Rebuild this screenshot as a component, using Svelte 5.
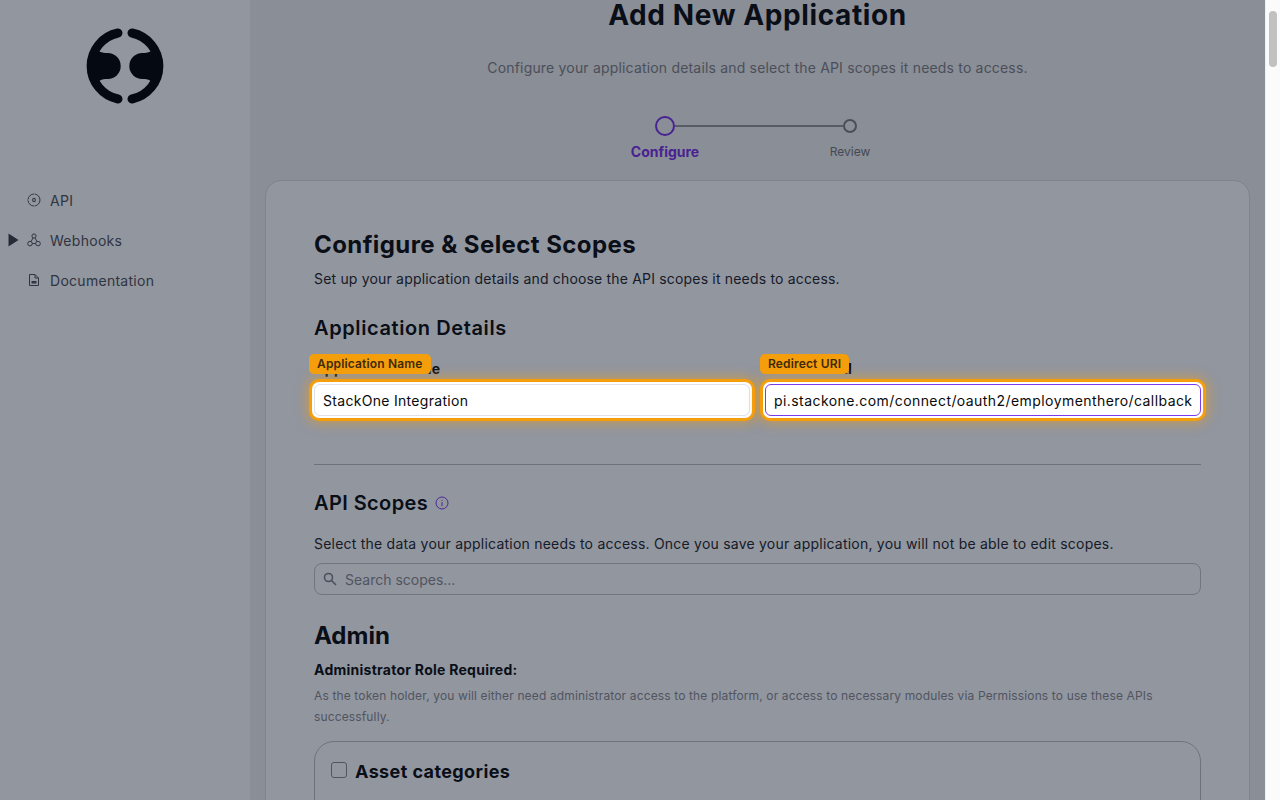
<script>
  const nav = [
    { label: 'API', icon: 'api' },
    { label: 'Webhooks', icon: 'hook', caret: true },
    { label: 'Documentation', icon: 'doc' }
  ];
</script>

<div class="shell">
  <div class="viewport">
    <aside class="sidebar">
      <div class="logo">
        <svg width="78" height="78" viewBox="86 27.5 78 78" aria-label="logo">
          <path class="arc" d="M118 33.5 A33.7 33.7 0 0 0 118 99.5" />
          <path class="arc" d="M132 33.5 A33.7 33.7 0 0 1 132 99.5" />
          <circle cx="107.7" cy="66.5" r="13" fill="#000" />
          <circle cx="142.3" cy="66.5" r="13" fill="#000" />
          <path d="M108 53.5 C101 53.5 98 52 95 47 L92 66.5 L95 86 C98 81 101 79.5 108 79.5 Z" fill="#000" />
          <path d="M142 53.5 C149 53.5 152 52 155 47 L158 66.5 L155 86 C152 81 149 79.5 142 79.5 Z" fill="#000" />
        </svg>
      </div>
      <nav class="nav">
        {#each nav as item}
          <div class="nav-item">
            <span class="caret-slot">
              {#if item.caret}<svg width="11" height="14" viewBox="0 0 11 14"><path d="M0.5 0.5 L10.5 7 L0.5 13.5 Z" fill="#3a3c44" /></svg>{/if}
            </span>
            <span class="nav-icon">
              {#if item.icon === 'api'}
                <svg width="14" height="14" viewBox="0 0 14 14" fill="none" stroke="#4e5057" stroke-width="1">
                  <circle cx="7" cy="7" r="6" stroke-dasharray="8.6 0.8" />
                  <ellipse cx="7" cy="7" rx="1.3" ry="1.8" stroke-width="1.1" />
                </svg>
              {:else if item.icon === 'hook'}
                <svg width="14" height="14" viewBox="0 0 14 14" fill="none" stroke="#4e5057" stroke-width="1">
                  <circle cx="7" cy="3" r="2.1" />
                  <circle cx="3" cy="10.6" r="2.3" />
                  <circle cx="11" cy="10.6" r="2.3" />
                  <path d="M6 5 L4 8.6 M8 5 L10 8.6 M5.3 10.6 H8.7" />
                </svg>
              {:else}
                <svg width="14" height="14" viewBox="0 0 14 14" fill="none" stroke="#4e5057" stroke-width="1">
                  <path d="M2.5 1.5 H8 L11.5 5 V12.5 H2.5 Z M8 1.5 V5 H11.5" />
                  <path d="M4.5 8 H9.5 V10.5 H4.5 Z" fill="#4e5057" stroke="none" />
                </svg>
              {/if}
            </span>
            <span>{item.label}</span>
          </div>
        {/each}
      </nav>
    </aside>

    <main class="main">
      <header class="head">
        <h1>Add New Application</h1>
        <p>Configure your application details and select the API scopes it needs to access.</p>
      </header>

      <div class="stepper">
        <div class="step active">
          <span class="dot big"></span>
          <span class="step-label">Configure</span>
        </div>
        <div class="line"></div>
        <div class="step">
          <span class="dot"></span>
          <span class="step-label">Review</span>
        </div>
      </div>

      <section class="card">
        <h2>Configure &amp; Select Scopes</h2>
        <p class="sub">Set up your application details and choose the API scopes it needs to access.</p>
        <h3>Application Details</h3>
        <div class="fields">
          <div class="field">
            <span class="field-label">Application Name</span>
            <div class="spot">
              <span class="tag">Application Name</span>
              <div class="input">StackOne Integration</div>
            </div>
          </div>
          <div class="field">
            <span class="field-label">Redirect URI</span>
            <div class="spot">
              <span class="tag">Redirect URI</span>
              <div class="input focus">pi.stackone.com/connect/oauth2/employmenthero/callback</div>
            </div>
          </div>
        </div>
        <hr />
        <div class="scopes-title">
          <h3>API Scopes</h3>
          <svg width="14" height="14" viewBox="0 0 14 14" fill="none" stroke="#7c3aed" stroke-width="1">
            <circle cx="7" cy="7" r="6" />
            <path d="M7 6 V10.2 M7 3.8 V4.8" />
          </svg>
        </div>
        <p class="scopes-sub">Select the data your application needs to access. Once you save your application, you will not be able to edit scopes.</p>
        <div class="search">
          <svg width="16" height="16" viewBox="0 0 16 16" fill="none" stroke="#7f7f82" stroke-width="1.6">
            <circle cx="6.5" cy="6.5" r="4" />
            <path d="M9.5 9.5 L14 14" />
          </svg>
          <span>Search scopes...</span>
        </div>
        <h2 class="admin">Admin</h2>
        <p class="role">Administrator Role Required:</p>
        <p class="note">As the token holder, you will either need administrator access to the platform, or access to necessary modules via Permissions to use these APIs successfully.</p>
        <div class="scope-card">
          <span class="check"></span>
          <span class="scope-name">Asset categories</span>
        </div>
      </section>
    </main>
    <div class="overlay"></div>
  </div>
  <div class="scrollbar"><div class="thumb"></div></div>
</div>

<style>
  :global(body) {
    margin: 0;
    overflow: hidden;
    font-family: Inter, "Noto Sans", sans-serif;
    color: #0a0a0a;
  }
  .shell {
    display: flex;
    width: 1280px;
    height: 800px;
    overflow: hidden;
  }
  .viewport {
    position: relative;
    flex: 0 0 1265px;
    display: flex;
    height: 800px;
    overflow: hidden;
    background: #f0f0ef;
  }
  .overlay {
    position: absolute;
    inset: 0;
    background: rgba(11, 20, 40, 0.447);
    z-index: 1;
    pointer-events: none;
  }
  .scrollbar {
    flex: 0 0 15px;
    background: #fbfbfb;
    border-left: 1px solid #f0f0f0;
    box-sizing: border-box;
    padding: 11px 3px 0 3px;
  }
  .thumb {
    height: 56px;
    border-radius: 5px;
    background: #c1c1c1;
  }
  .sidebar {
    flex: 0 0 250px;
    background: #fff;
    box-sizing: border-box;
  }
  .logo {
    display: flex;
    justify-content: center;
    padding-top: 27px;
    height: 150px;
    box-sizing: border-box;
  }
  .arc {
    fill: none;
    stroke: #000;
    stroke-width: 9;
    stroke-linecap: round;
  }
  .nav {
    padding-top: 38px;
    display: flex;
    flex-direction: column;
    gap: 16px;
  }
  .nav-item {
    display: flex;
    align-items: center;
    height: 24px;
    font-size: 14px;
    letter-spacing: 0.28px;
    color: #4e5057;
  }
  .caret-slot {
    width: 27px;
    padding-left: 8px;
    box-sizing: border-box;
    display: flex;
    align-items: center;
  }
  .nav-icon {
    width: 23px;
    display: flex;
    align-items: center;
  }
  .main {
    flex: 1;
    min-width: 0;
    padding: 0 15px;
    box-sizing: border-box;
  }
  .head {
    text-align: center;
  }
  h1 {
    margin: 0;
    font-size: 28px;
    font-weight: 700;
    line-height: 30px;
    letter-spacing: 0.6px;
  }
  .head p {
    margin: 27px 0 0;
    font-size: 14px;
    line-height: 21px;
    letter-spacing: 0.18px;
    color: #7f7f82;
  }
  .stepper {
    display: flex;
    justify-content: center;
    align-items: flex-start;
    margin-top: 38px;
    height: 64px;
  }
  .step {
    width: 70px;
    display: flex;
    flex-direction: column;
    align-items: center;
    gap: 11px;
    font-size: 12px;
    color: #75757a;
  }
  .step.active {
    color: #7a2ee8;
    font-weight: 700;
    font-size: 14px;
    gap: 7px;
  }
  .step .dot {
    width: 14px;
    height: 14px;
    margin-top: 3px;
    box-sizing: border-box;
    border: 2px solid #7e7e80;
    border-radius: 50%;
  }
  .step .dot.big {
    width: 20px;
    height: 20px;
    margin-top: 0;
    border-color: #7a2ee8;
  }
  .line {
    width: 168px;
    height: 2px;
    margin: 9px -28px 0 -25px;
    background: #969696;
  }
  .card {
    background: #fff;
    border: 1px solid #dcdcdc;
    border-radius: 16px;
    padding: 48px 48px 0;
    box-sizing: border-box;
    height: 640px;
  }
  h2 {
    margin: 0;
    font-size: 24px;
    font-weight: 700;
    line-height: 32px;
    letter-spacing: 0.42px;
  }
  .sub {
    margin: 7px 0 0;
    font-size: 14px;
    line-height: 21px;
    letter-spacing: 0.18px;
    color: #242428;
  }
  h3 {
    margin: 0;
    font-size: 20px;
    font-weight: 600;
    line-height: 28px;
    letter-spacing: 0.6px;
  }
  .sub + h3 { margin-top: 25px; }
  .fields {
    display: grid;
    grid-template-columns: minmax(0, 1fr) minmax(0, 1fr);
    gap: 15px;
    margin-top: 17px;
    align-items: start;
  }
  .field-label {
    display: block;
    font-size: 14px;
    font-weight: 700;
    line-height: 20px;
    height: 25px;
    letter-spacing: 0.3px;
  }
  .spot {
    position: relative;
    z-index: 2;
    margin: -5px;
    padding: 2px;
    border: 3px solid #f59e0b;
    border-radius: 10px;
    background: #fff;
    box-shadow: 0 0 12px 2px rgba(245, 158, 11, 0.5);
  }
  .tag {
    position: absolute;
    left: -3px;
    top: -28px;
    background: #f59e0b;
    color: #3f2a08;
    font-size: 12px;
    font-weight: 600;
    line-height: 20px;
    letter-spacing: 0.16px;
    padding: 0 8px;
    border-radius: 5px;
  }
  .input {
    height: 32px;
    box-sizing: border-box;
    background: #fff;
    border: 1px solid #dfe2e8;
    border-radius: 6px;
    padding: 0 8px;
    font-size: 14px;
    line-height: 32px;
    letter-spacing: 0.3px;
    color: #0a0a0a;
    overflow: hidden;
    white-space: nowrap;
  }
  .input.focus {
    border-color: #7c3aed;
    letter-spacing: 0.43px;
  }
  hr {
    border: 0;
    border-top: 1px solid #bfbfbf;
    margin: 48px 0 0;
  }
  .scopes-title {
    display: flex;
    align-items: center;
    gap: 7px;
    margin-top: 24px;
  }
  .scopes-title h3 { letter-spacing: 0.4px; }
  .scopes-sub {
    margin: 16px 0 0;
    font-size: 14px;
    line-height: 21px;
    letter-spacing: 0.22px;
    color: #242428;
  }
  .search {
    display: flex;
    align-items: center;
    gap: 7px;
    height: 32px;
    box-sizing: border-box;
    margin-top: 9px;
    padding-left: 7px;
    border: 1px solid #c4c4c4;
    border-radius: 8px;
    font-size: 14px;
    color: #8a8a8e;
  }
  .admin {
    margin-top: 25px;
    letter-spacing: 0;
  }
  .role {
    margin: 8px 0 0;
    font-size: 14px;
    font-weight: 700;
    line-height: 20px;
    letter-spacing: 0.26px;
  }
  .note {
    margin: 5px 0 0;
    font-size: 12px;
    line-height: 21px;
    letter-spacing: 0.14px;
    color: #8a8a8e;
  }
  .scope-card {
    margin-top: 14px;
    border: 1px solid #bfbfbf;
    border-radius: 20px;
    padding: 19px 16px;
    display: flex;
    align-items: flex-start;
    gap: 8px;
    height: 200px;
    box-sizing: border-box;
  }
  .check {
    width: 16px;
    height: 16px;
    margin-top: 1px;
    box-sizing: border-box;
    border: 1px solid #8a8a8e;
    border-radius: 3px;
  }
  .scope-name {
    font-size: 18px;
    font-weight: 700;
    line-height: 22px;
    letter-spacing: 0.4px;
  }
</style>
